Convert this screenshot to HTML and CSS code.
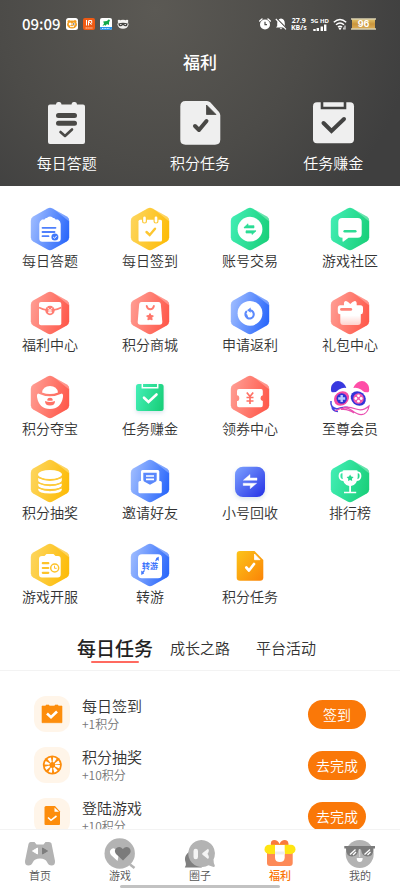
FILE: index.html
```html
<!DOCTYPE html>
<html lang="zh-CN">
<head>
<meta charset="utf-8">
<meta name="viewport" content="width=device-width, initial-scale=1">
<title>福利</title>
<link rel="stylesheet" href="styles.css">
</head>
<body>
<svg class="defs" width="0" height="0" aria-hidden="true">
  <defs>
    <linearGradient id="blue" x1="0" y1="0.3" x2="1" y2="0.6"><stop offset="0" stop-color="#9dbbff"/><stop offset="1" stop-color="#2b68fb"/></linearGradient>
    <linearGradient id="gold" x1="0" y1="0.3" x2="1" y2="0.6"><stop offset="0" stop-color="#fdd55c"/><stop offset="1" stop-color="#fdbc08"/></linearGradient>
    <linearGradient id="green" x1="0" y1="0.3" x2="1" y2="0.6"><stop offset="0" stop-color="#41edb3"/><stop offset="1" stop-color="#1ad07b"/></linearGradient>
    <linearGradient id="red" x1="0" y1="0.3" x2="1" y2="0.6"><stop offset="0" stop-color="#ff9c92"/><stop offset="1" stop-color="#ff594b"/></linearGradient>
    <linearGradient id="royal" x1="0" y1="0" x2="1" y2="1"><stop offset="0" stop-color="#7ea3ff"/><stop offset="1" stop-color="#2330e6"/></linearGradient>
    <linearGradient id="orange" x1="0" y1="0" x2="1" y2="1"><stop offset="0" stop-color="#fcc419"/><stop offset="1" stop-color="#fb8407"/></linearGradient>
    <linearGradient id="gift" x1="0" y1="0" x2="0" y2="1"><stop offset="0.6" stop-color="#fff"/><stop offset="1" stop-color="#ffd2cd"/></linearGradient>
    <linearGradient id="battery" x1="0" y1="0" x2="0" y2="1"><stop offset="0" stop-color="#e3c56c"/><stop offset="0.5" stop-color="#c9953c"/><stop offset="1" stop-color="#dcae58"/></linearGradient>
    <symbol id="hex" viewBox="0 0 44 44">
      <path d="M19.500 1.400Q22 0 24.500 1.400L38.800 9.600Q41.200 11 41.200 13.800V30.200Q41.200 33 38.800 34.400L24.500 42.600Q22 44 19.500 42.600L5.200 34.400Q2.800 33 2.800 30.200V13.800Q2.800 11 5.200 9.600Z"/>
      <path d="M26 2.300L38.800 9.600Q41.200 11 41.200 14.500Z" fill="#fff" fill-opacity=".3"/>
    </symbol>
  </defs>
</svg>

<main class="page">
  <header class="hero">
    <div class="status">
      <div class="status-left">
        <time>09:09</time>
        <svg width="12" height="12" viewBox="0 0 12 12"><rect width="12" height="12" rx="2.500" fill="#fff"/><circle cx="3" cy="3.600" r="1.500" fill="#f29c20"/><circle cx="9" cy="3.600" r="1.500" fill="#f29c20"/><ellipse cx="6" cy="6.500" rx="5" ry="4" fill="#f29c20"/><circle cx="4.200" cy="6" r="1.500" fill="#fff"/><circle cx="7.800" cy="6" r="1.500" fill="#fff"/><circle cx="7.800" cy="6" r=".7" fill="#333"/><path d="M4 8.600h4" stroke="#fff"/></svg>
        <svg width="12" height="12" viewBox="0 0 12 12"><rect width="12" height="12" rx="2" fill="#ef5a13"/><path d="M3.500 2v5.500M5.500 7.500V3l3 3.800M5.500 2.500h3.200v3" fill="none" stroke="#fff" stroke-width="1"/><path d="M2.500 10h7" stroke="#ffd0b0" stroke-width="1" stroke-dasharray="1.500 .4"/></svg>
        <svg width="12" height="12" viewBox="0 0 12 12"><rect width="12" height="12" rx="2" fill="#fff"/><path d="M2.500 8L4 5.500L3.200 3.500L7 3L8.500 1.500L10 2L9 4.500V7L7 6L5.500 7.800L4.500 7Z" fill="#11a84a"/><path d="M0 9h12v1q0 2-2 2H2Q0 12 0 10Z" fill="#2b96ee"/><path d="M2 10.500h8" stroke="#fff" stroke-width=".8" stroke-dasharray="1 .6"/></svg>
        <svg width="12" height="12" viewBox="0 0 12 12"><ellipse cx="6" cy="6.300" rx="5.500" ry="4.500" fill="#f2f2f0"/><circle cx="2" cy="3" r="1.300" fill="#f2f2f0"/><circle cx="10" cy="3" r="1.300" fill="#f2f2f0"/><path d="M1.200 5.500Q6 4 10.800 5.500Q10.500 8.500 8.500 8.300Q7 8.200 6 7Q5 8.200 3.500 8.300Q1.500 8.500 1.200 5.500Z" fill="#454542"/><path d="M3 6.500h1.500M7.500 6.500H9" stroke="#fff" stroke-width=".8"/></svg>
      </div>
      <div class="status-right">
        <svg width="12" height="12" viewBox="0 0 12 12"><circle cx="6" cy="6.500" r="5" fill="#fff"/><path d="M.7 3L3 1M11.300 3L9 1" stroke="#fff" stroke-width="1.400" stroke-linecap="round"/><path d="M6 3.800V6.700H8" fill="none" stroke="#4d4c49" stroke-width="1.200"/></svg>
        <svg width="12" height="12" viewBox="0 0 12 12"><path d="M6 .5Q9.800 1 9.800 5.500V8L11 9.500H1L2.200 8V5.500Q2.200 1 6 .5ZM4.700 10.300H7.300Q6 12 4.700 10.300Z" fill="#fff"/><path d="M1.600 .4L12 10.800" stroke="#4b4a47" stroke-width="1.300"/><path d="M.8 1L11 11.300" stroke="#fff" stroke-width="1.100"/></svg>
        <div class="speed"><span>27.9</span><span>KB/s</span></div>
        <div class="signal"><span>5G HD</span>
          <svg width="14" height="7" viewBox="0 0 14 7"><path d="M1.500 7V5M4.800 7V4M8.800 7V2.500M12.200 7V.5" stroke="#fff" stroke-width="2.400"/></svg>
        </div>
        <svg width="14" height="12" viewBox="0 0 14 12"><path d="M.8 4.300Q7-1.200 13.200 4.300M3 6.800Q7 3.300 11 6.800M5 9.100Q7 7.300 9 9.100" fill="none" stroke="#fff" stroke-width="1.500"/><circle cx="7" cy="10.600" r="1.200" fill="#fff"/><path d="M12 7.500v4M10.800 9.500v2" stroke="#fff" stroke-width="1"/></svg>
        <svg width="25" height="12" viewBox="0 0 25 12"><rect x="1" y="1" width="23" height="10" fill="url(#battery)"/><path d="M0 1h25M0 11h25" stroke="#d9cfae" stroke-width="1.400"/><text x="12.500" y="9.300" text-anchor="middle" class="battery-text">96</text></svg>
      </div>
    </div>
    <h1>福利</h1>
    <div class="hero-actions">
      <a href="#quiz"><svg width="44" height="44" viewBox="0 0 44 44"><path d="M5 3.500H11Q11 1 13 1H14.500Q16.500 1 16.500 3.500H26.500Q26.500 1 28.500 1H30Q32 1 32 3.500H38Q40 3.500 40 5.500V41Q40 43 38 43H5Q3 43 3 41V5.500Q3 3.500 5 3.500Z" fill="#efefef"/><path d="M13.500 14.500h16M13.500 22.200h16" stroke="#4a4946" stroke-width="5" stroke-linecap="round"/><path d="M15.500 31L20 35L27 28.500" fill="none" stroke="#4a4946" stroke-width="2.600" stroke-linecap="round" stroke-linejoin="round"/></svg><span>每日答题</span></a>
      <a href="#points"><svg width="44" height="44" viewBox="0 0 44 44"><path d="M7.500 0H29Q31 0 32.500 1.500L41 11Q42.300 12.500 42.300 14.500V38.500Q42.300 43.700 37 43.700H7.500Q2.300 43.700 2.300 38.500V5.500Q2.300 0 7.500 0Z" fill="#efefef"/><path d="M28.500 4V13.500H38Z" fill="#494845" stroke="#494845" stroke-width=".8" stroke-linejoin="round"/><path d="M17 25L21 29L28.500 20" fill="none" stroke="#494845" stroke-width="4" stroke-linecap="round" stroke-linejoin="round"/></svg><span>积分任务</span></a>
      <a href="#earn"><svg width="44" height="44" viewBox="0 0 44 44"><rect x="2" y="1.300" width="41" height="41" rx="4" fill="#efefef"/><path d="M11 1V7H34V1" fill="none" stroke="#434342" stroke-width="2.600"/><path d="M12.500 22L20.500 30L33 18" fill="none" stroke="#434342" stroke-width="4" stroke-linecap="round"/></svg><span>任务赚金</span></a>
    </div>
  </header>

  <section class="services" aria-label="福利功能">
    <a href="#s1"><svg class="icon" viewBox="0 0 44 44"><use href="#hex" fill="url(#blue)"/><path d="M14 12.500H16.500Q17 10.500 19 11Q19.500 9.500 22 9.500T25 11Q27 10.500 27.500 12.500H30Q32.700 14 32.700 17V31.700Q32.700 34.700 29.700 34.700H14.300Q11.300 34.700 11.300 31.700V17Q11.300 14 14 12.500Z" fill="#fff"/><path d="M14.500 20.800H27.500M14.500 25H26.500M14.500 29.200H20.500" stroke="#4f80fc" stroke-width="1.800" stroke-linecap="round"/><circle cx="26.900" cy="30" r="3.500" fill="#4077fb"/><path d="M25.200 30L26.500 31.300L28.800 28.800" stroke="#fff" fill="none"/></svg><span>每日答题</span></a>
    <a href="#s2"><svg class="icon" viewBox="0 0 44 44"><use href="#hex" fill="url(#gold)"/><rect x="10.500" y="12.800" width="23.500" height="21.700" rx="1.500" fill="#fff"/><path d="M16.500 11.500V14M28 11.500V14" stroke="#fdca38" stroke-width="5" stroke-linecap="round"/><path d="M16.500 10.800V14.200M28 10.800V14.200" stroke="#fff" stroke-width="2.600" stroke-linecap="round"/><path d="M18.500 25L21.700 28L27 21.700" fill="none" stroke="#fdc630" stroke-width="2.400" stroke-linecap="round"/></svg><span>每日签到</span></a>
    <a href="#s3"><svg class="icon" viewBox="0 0 44 44"><use href="#hex" fill="url(#green)"/><circle cx="22" cy="22.200" r="12.400" fill="#fff"/><path d="M16 20.500L20 16.800V18.700H26V20.900H16ZM28 23.900L24 27.500V26H18V23.800H28Z" fill="#2bdc95" stroke="#2bdc95" stroke-width=".7" stroke-linejoin="round"/></svg><span>账号交易</span></a>
    <a href="#s4"><svg class="icon" viewBox="0 0 44 44"><use href="#hex" fill="url(#green)"/><path d="M14.300 11H29.700Q33.700 11 33.700 15V26.700Q33.700 30.700 29.700 30.700H20.500L15.500 34.500Q14.500 35 14.500 33.800V30.700Q10.300 30.700 10.300 26.700V15Q10.300 11 14.300 11Z" fill="#fff"/><path d="M16.700 24.200H27.300" stroke="#2ddc95" stroke-width="2.600" stroke-linecap="round"/></svg><span>游戏社区</span></a>

    <a href="#s5"><svg class="icon" viewBox="0 0 44 44"><use href="#hex" fill="url(#red)"/><rect x="11" y="11" width="22.300" height="23.200" rx="2" fill="#fff"/><path d="M11 16.500Q15 18.500 18.500 19M33.300 16.500Q29.500 18.500 25.500 19" fill="none" stroke="#ff8176" stroke-width="1.600"/><circle cx="22" cy="19.500" r="4.700" fill="#ff7d72"/><path d="M19.700 16.800L22 19.400L24.300 16.800M22 19.400V22.800M20 20H24M20 21.600H24" fill="none" stroke="#fff" stroke-width=".9"/></svg><span>福利中心</span></a>
    <a href="#s6"><svg class="icon" viewBox="0 0 44 44"><use href="#hex" fill="url(#red)"/><path d="M13.500 11H30.500Q32.500 11 32.800 13L34.300 30.700Q34.500 33.700 31.500 33.700H12.500Q9.500 33.700 9.700 30.700L11.200 13Q11.500 11 13.500 11Z" fill="#fff"/><path d="M18.700 15Q19.500 18.300 22.300 18.300T25.900 15" fill="none" stroke="#ff7c70" stroke-width="1.900" stroke-linecap="round"/><path d="M22 22.500L23.100 24.500L25.400 24.900L23.800 26.600L24.100 28.900L22 28L19.900 28.900L20.200 26.600L18.600 24.900L20.900 24.500Z" fill="#ff7569" stroke="#ff7569" stroke-width="1" stroke-linejoin="round"/></svg><span>积分商城</span></a>
    <a href="#s7"><svg class="icon" viewBox="0 0 44 44"><use href="#hex" fill="url(#blue)"/><circle cx="22" cy="22.300" r="12.400" fill="#fff"/><path d="M18.300 20.700A4.200 4.200 0 1 0 22.300 19.200M18.300 24Q18.500 25 19 25.800" fill="none" stroke="#5b89fc" stroke-width="2.100" stroke-linecap="round"/><path d="M19 19.300L22.700 16.600V21.800Z" fill="#5b89fc"/></svg><span>申请返利</span></a>
    <a href="#s8"><svg class="icon" viewBox="0 0 44 44"><use href="#hex" fill="url(#red)"/><path d="M12 14.200H16Q15.500 10 18 10Q20 10.500 22.300 13Q24.500 10.500 26.800 10Q29 10 28.700 14.200H32.500Q35 14.200 35 16.700V20.800Q35 23.300 32.800 23.300V31Q32.800 34 29.800 34H15.300Q12.300 34 12.300 31V23.300Q9.800 23.300 9.800 20.800V16.700Q9.800 14.200 12 14.200Z" fill="url(#gift)"/><path d="M13.500 18.400H22.700" stroke="#ff8378" stroke-width="2.900" stroke-linecap="round"/></svg><span>礼包中心</span></a>

    <a href="#s9"><svg class="icon" viewBox="0 0 44 44"><use href="#hex" fill="url(#red)"/><path d="M14 17.500Q15 11 22 11T30 17.500Q22 20.500 14 17.500Z" fill="#fff"/><path d="M10 18.500Q22 24 34 18.500Q35.500 19 35 22Q33 34 22 34T9 22Q8.500 19 10 18.500Z" fill="#fff"/><path d="M19 25.200Q19.500 22.800 22 22.800T25 25.200Q22 26.200 19 25.200ZM17 26Q22 28 27 26Q27 30.500 22 30.500T17 26Z" fill="#ff7266"/></svg><span>积分夺宝</span></a>
    <a href="#s10"><svg class="icon" viewBox="0 0 44 44"><rect class="glow" x="8" y="9" width="27.600" height="27" rx="2.500" fill="url(#green)"/><path d="M14.300 9V12.700H29.700V9" fill="none" stroke="#fff" stroke-width="1.500"/><path d="M16 22.700L20.500 27L28.500 19.500" fill="none" stroke="#fff" stroke-width="2.600" stroke-linecap="round"/></svg><span>任务赚金</span></a>
    <a href="#s11"><svg class="icon" viewBox="0 0 44 44"><use href="#hex" fill="url(#red)"/><path d="M11 14H33Q34.800 14 34.800 16V20.200Q32.500 20.500 32.500 23.200T34.800 26V30.300Q34.800 32.300 33 32.300H11Q9 32.300 9 30.300V26Q11.300 26 11.300 23.200T9 20.200V16Q9 14 11 14Z" fill="#fff"/><path d="M18.800 17.500L22 21.500L25.200 17.500M22 21.500V29M18.500 22.500H25.500M18.500 26H25.500" fill="none" stroke="#ff7165" stroke-width="1.700"/></svg><span>领券中心</span></a>
    <a href="#s12"><svg class="icon" viewBox="0 0 44 44"><path d="M3.500 17Q1.800 12 5 8.500T12.500 6.500T18.300 13Q15 12 11 14.500Q8 18 3.500 17Z" fill="#3838df"/><path d="M40.700 17Q42.200 12 39 8.500T31.500 6.500T25.300 13Q29 12 33 14.500Q36 18 40.700 17Z" fill="#ff4da7"/><ellipse cx="13.500" cy="23.500" rx="8" ry="6.800" fill="#f34aa5" transform="rotate(-40 13.500 23.500)"/><circle cx="13.700" cy="23.500" r="5.200" fill="#3033d4"/><path d="M13.700 20V27M10.200 23.500H17.200" stroke="#b7ccff" stroke-width="2.400"/><ellipse cx="30.300" cy="23.500" rx="8" ry="6.800" fill="#3333d8" transform="rotate(40 30.300 23.500)"/><circle cx="30.500" cy="23.500" r="5.300" fill="#f258af"/><g fill="#fff"><circle cx="30.500" cy="20.800" r="1.400"/><circle cx="30.500" cy="26.200" r="1.400"/><circle cx="27.800" cy="23.500" r="1.400"/><circle cx="33.200" cy="23.500" r="1.400"/></g><path d="M3 26Q2 33 9 34Q15 31.500 20 32.500M4 31Q4 36 10 36.500" fill="none" stroke="#4145df" stroke-width="1.500"/><path d="M7 36Q17 30 24 35.500T36 39Q40 37 41 31Q35 36.500 28 34T15 32.500M13 34.500Q20 33.500 26 38" fill="none" stroke="#ea4fb1" stroke-width="1.200"/></svg><span>至尊会员</span></a>

    <a href="#s13"><svg class="icon" viewBox="0 0 44 44"><use href="#hex" fill="url(#gold)"/><g fill="#fff"><path d="M10.200 29.500Q22 34.500 33.800 29.500V30.800Q33.800 34.500 22 34.500T10.200 30.800Z"/><path d="M10.200 24.500Q22 29.500 33.800 24.500V26.300Q33.800 30 22 30T10.200 26.300Z"/><path d="M10.200 19Q22 24 33.800 19V21.500Q33.800 25.200 22 25.200T10.200 21.500Z"/><ellipse cx="22" cy="15.500" rx="11.900" ry="4.500"/></g><path d="M10 18.200Q22 24.500 34 18.200M10 23.500Q22 29.500 34 23.500M10 28.500Q22 34.500 34 28.500" fill="none" stroke="#fdcb3d" stroke-width="1.300"/></svg><span>积分抽奖</span></a>
    <a href="#s14"><svg class="icon" viewBox="0 0 44 44"><use href="#hex" fill="url(#blue)"/><path d="M13 22V12.500Q13 11 14.500 11H29.800Q31.300 11 31.300 12.500V22H32.200Q33.800 22 33.800 23.500V32.800Q33.800 34.300 32.300 34.300H12Q10.400 34.300 10.400 32.800V23.500Q10.400 22 12 22Z" fill="#fff"/><path d="M15.300 13.800H28.700V20.500Q28.700 22.500 27 23L22 25.800L17 23Q15.300 22.500 15.300 20.500Z" fill="#5a88fc"/><path d="M18 17H26M18 20.300H26" stroke="#fff" stroke-width="1.700"/></svg><span>邀请好友</span></a>
    <a href="#s15"><svg class="icon" viewBox="0 0 44 44"><rect class="glow" x="7" y="7.700" width="30" height="30.300" rx="8" fill="url(#royal)"/><path d="M15.500 21L22 15.500V18.900H29V21.300H15.500ZM28.700 24.200L22.200 29.700V26.500H15.200V24.200Z" fill="#fff" stroke="#fff" stroke-width=".4" stroke-linejoin="round"/></svg><span>小号回收</span></a>
    <a href="#s16"><svg class="icon" viewBox="0 0 44 44"><use href="#hex" fill="url(#green)"/><path d="M15.500 13.500Q11.500 12.500 11.500 17T16.500 21M28.500 13.500Q32.500 12.500 32.500 17T27.500 21" fill="none" stroke="#fff" stroke-width="1.800"/><path d="M16 11.300H28.500Q29.700 11.300 29.700 12.500V18Q29.500 25.800 23 27V32.700H28.200V34.300H16V32.700H21.200V27Q14.700 25.800 14.500 18V12.500Q14.500 11.300 16 11.300Z" fill="#fff"/><path d="M22.100 15.500L23.200 17.600L25.600 18L23.900 19.700L24.200 22L22.100 21L20 22L20.300 19.700L18.600 18L21 17.600Z" fill="#24d88e"/></svg><span>排行榜</span></a>

    <a href="#s17"><svg class="icon" viewBox="0 0 44 44"><use href="#hex" fill="url(#gold)"/><path d="M14 13H16.500L18.500 11H25.500L27.500 13H30Q32.700 13 32.700 16V31.500Q32.700 34.500 29.700 34.500H14Q11 34.500 11 31.500V16Q11 13 14 13Z" fill="#fff"/><path d="M14.800 20.200H20.300M14.800 25H20.300M14.800 29.800H20.300" stroke="#fdc32a" stroke-width="2.200" stroke-linecap="round"/><circle cx="26.700" cy="25" r="4" fill="#fff" stroke="#fdc32a" stroke-width="1.500"/><path d="M26.500 22.700V25.300H28.700" fill="none" stroke="#fdc32a"/></svg><span>游戏开服</span></a>
    <a href="#s18"><svg class="icon" viewBox="0 0 44 44"><use href="#hex" fill="url(#blue)"/><rect x="10" y="11.200" width="24" height="24" rx="4" fill="#fff"/><text x="22" y="25.500" text-anchor="middle" class="mini-text">转游</text><path d="M27.500 17.800L29.500 15.800M14.500 29.500L16.500 27.500" stroke="#3c74fc" stroke-width="1.300"/><path d="M28 15.500L30.500 14V17.500ZM16 30.200L13.500 31.500V28Z" fill="#3c74fc" stroke="#3c74fc" stroke-width=".5"/></svg><span>转游</span></a>
    <a href="#s19"><svg class="icon" viewBox="0 0 44 44"><path d="M12 8H26.500L35.300 17V34.500Q35.300 37.700 32 37.700H12Q8.700 37.700 8.700 34.500V11Q8.700 8 12 8Z" fill="url(#orange)"/><path d="M26.500 11V16.700H32Z" fill="#fff" stroke="#fff" stroke-width=".8" stroke-linejoin="round"/><path d="M18.300 24.500L21 27.500L26 21" fill="none" stroke="#fff" stroke-width="2.700" stroke-linecap="round" stroke-linejoin="round"/></svg><span>积分任务</span></a>
  </section>

  <div class="tabs" role="tablist">
    <button type="button" role="tab" aria-selected="true" class="tab active">每日任务</button>
    <button type="button" role="tab" aria-selected="false" class="tab">成长之路</button>
    <button type="button" role="tab" aria-selected="false" class="tab">平台活动</button>
  </div>

  <ul class="tasks">
    <li>
      <svg class="task-icon" viewBox="0 0 36 36"><path d="M8 10H12V9H15V10H21V9H24V10H28V26.700H8Z" fill="#fd8d0c" stroke="#fd8d0c" stroke-width=".6" stroke-linejoin="round"/><path d="M13 17.500L17 21.300L23 15.500" fill="none" stroke="#fff" stroke-width="2.600"/></svg>
      <div class="task-text"><h2>每日签到</h2><p>+1积分</p></div>
      <button type="button" class="go">签到</button>
    </li>
    <li>
      <svg class="task-icon" viewBox="0 0 36 36"><circle cx="18.300" cy="18" r="9.500" fill="#fd8d0c"/><circle cx="18.300" cy="18" r="5.200" fill="none" stroke="#fff" stroke-width="5" stroke-dasharray="2.480 1.604"/><circle cx="18.300" cy="18" r="2.800" fill="#fd8d0c"/></svg>
      <div class="task-text"><h2>积分抽奖</h2><p>+10积分</p></div>
      <button type="button" class="go">去完成</button>
    </li>
    <li>
      <svg class="task-icon" viewBox="0 0 36 36"><path d="M12 8H21L26 13.500V26Q26 27 25 27H11.500Q10.500 27 10.500 26V9.500Q10.500 8 12 8Z" fill="#fd8d0c"/><path d="M20.500 9.500V13.700H25Z" fill="#fff"/><path d="M14 19.500L17 22.300L22.500 18" fill="none" stroke="#fff" stroke-width="1.600"/></svg>
      <div class="task-text"><h2>登陆游戏</h2><p>+10积分</p></div>
      <button type="button" class="go">去完成</button>
    </li>
  </ul>
</main>

<nav class="bottom" aria-label="主导航">
  <div class="bottom-items">
    <a href="#home"><svg viewBox="0 0 32 32"><path d="M5 6Q5.500 5 7 5H10.500L12.500 7.500H19.500L21.500 5H25Q27 5 27.500 6.500L31 24Q31.300 28.500 27.500 28.500Q24.500 28.500 23 25Q21.500 21.500 16 21.500T9 25Q7.500 28.500 4.500 28.500Q.7 28.500 1 24L4.500 7Z" fill="#b3b3b3"/><path d="M13.500 11V17L8.500 14Z" fill="#fff" stroke="#fff" stroke-linejoin="round"/><path d="M18.500 11V17L23.500 14Z" fill="#7d7d7d" stroke="#7d7d7d" stroke-linejoin="round"/></svg><span>首页</span></a>
    <a href="#games"><svg viewBox="0 0 32 32"><circle cx="15.700" cy="16.500" r="15.200" fill="#b3b3b3"/><path d="M26 27.500L30.500 31" stroke="#b3b3b3" stroke-width="2.500"/><path d="M13.500 24L7 18Q4.500 14 7.500 12T13 14L16 12Z" fill="#fff"/><path d="M19 23.500L12 17Q9.500 13.500 12.500 11Q16 8.500 18.800 12Q22 8.500 25.300 11Q28 14 25.500 17Z" fill="#7b7b7b"/></svg><span>游戏</span></a>
    <a href="#circle"><svg viewBox="0 0 32 32"><path d="M1 30Q2.500 28 1.500 25Q-.5 19 5 15L18 30.500H1.500Q.5 30.500 1 30Z" fill="#7f7f7f"/><path d="M17.300 3A13.500 13.500 0 0 1 29.500 22.500Q29.500 26 30.800 28.500Q31 30 29.500 30L24.500 28.200A13.500 13.500 0 1 1 17.300 3Z" fill="#b3b3b3"/><rect x="9.500" y="11.800" width="4.500" height="10.500" rx="2.200" fill="#f4f4f4"/><path d="M24 11.800Q26 13.500 23.500 16.800Q26 20.500 24 22L18.500 17.800Q17.800 16.800 18.500 16Z" fill="#f4f4f4"/></svg><span>圈子</span></a>
    <a href="#welfare" class="current" aria-current="page"><svg viewBox="0 0 32 32"><path d="M7 9Q6 3 10 3T15.500 7Q17 3 21 3T24.500 9Z" fill="#f9793f"/><path d="M3 14H28.700V26Q28.700 29 25.700 29H6Q3 29 3 26Z" fill="#fd8a57"/><rect x=".5" y="7.700" width="31" height="9.200" rx="4.500" fill="#ffe512"/><path d="M11 8H20.700V20.500Q20.500 25 15.800 25T11 20.500Z" fill="#fff"/><path d="M11 14.500H20.700V17.500H11Z" fill="#eee"/></svg><span>福利</span></a>
    <a href="#me"><svg viewBox="0 0 32 32"><circle cx="15.700" cy="17" r="14" fill="#b3b3b3"/><path d="M.3 9H31V11.500H29.500Q29.500 19.500 23.500 19.500Q18 19.500 17 12.500H14.500Q13.500 19.500 8 19.500Q2 19.500 2 11.500H.3Z" fill="#7b7b7b"/><path d="M6 17.500L11.500 12.500M9 18L12 15M20.500 17.500L26 12.500M23.500 18L26.500 15" stroke="#fff" stroke-width="1.300"/><path d="M15.700 12V20" stroke="#ddd"/><path d="M12.700 21H18.700Q18.700 25 15.700 25T12.700 21Z" fill="#fff"/></svg><span>我的</span></a>
  </div>
  <div class="home-bar"></div>
</nav>
</body>
</html>
```
FILE: styles.css
```css
* {
  box-sizing: border-box;
  margin: 0;
  padding: 0;
}

body {
  display: flex;
  flex-direction: column;
  height: 100vh;
  background: #fff;
  color: #333;
  font-family: "Noto Sans CJK SC", "Noto Sans", sans-serif;
  font-size: 14px;
  font-weight: 350;
}

a {
  color: inherit;
  text-decoration: none;
}

button {
  border: 0;
  background: none;
  color: inherit;
  font-family: inherit;
  font-weight: inherit;
  cursor: pointer;
}

svg {
  display: block;
  flex: none;
}

.defs {
  position: absolute;
}

.page {
  flex: 1;
  min-height: 0;
  overflow-y: auto;
  scrollbar-width: none;
}

/* Header */
.hero {
  padding: 14px 0 12px;
  background: radial-gradient(ellipse 260px 260px at 155px 10px, #5b5954 0%, #4c4b48 60%, #3f3f3f 100%);
  color: #fff;
}

.status {
  display: flex;
  align-items: center;
  justify-content: space-between;
  height: 20px;
  padding: 0 24px 0 22px;
}

.status-left {
  display: flex;
  align-items: center;
  gap: 5px;
}

.status-left time {
  font-size: 15px;
  font-weight: 500;
  line-height: 20px;
}

.status-right {
  display: flex;
  align-items: center;
  gap: 4px;
}

.speed,
.signal {
  display: flex;
  flex-direction: column;
  align-items: center;
  font-family: "Open Sans", "Noto Sans", sans-serif;
  font-weight: 700;
}

.speed {
  font-size: 7px;
  line-height: 7px;
}

.signal {
  font-size: 6px;
  line-height: 6px;
}

.battery-text {
  fill: #fff;
  font-family: Inter, sans-serif;
  font-size: 9px;
  font-weight: 700;
}

.hero h1 {
  margin-top: 16px;
  font-size: 17px;
  font-weight: 500;
  line-height: 24px;
  text-align: center;
}

.hero-actions {
  display: grid;
  grid-template-columns: repeat(3, 1fr);
  margin-top: 27px;
}

.hero-actions a {
  display: flex;
  flex-direction: column;
  align-items: center;
  gap: 7px;
  font-size: 15px;
  line-height: 22px;
}

/* Service grid */
.services {
  display: grid;
  grid-template-columns: repeat(4, 1fr);
  row-gap: 22px;
  padding-top: 21px;
}

.services a {
  display: flex;
  flex-direction: column;
  align-items: center;
  line-height: 18px;
}

.icon {
  width: 44px;
  height: 44px;
}

.glow {
  filter: drop-shadow(0 2px 2px rgba(60, 120, 160, 0.2));
}

.mini-text {
  fill: #3c74fc;
  font-size: 8px;
  font-weight: 700;
}

/* Tabs */
.tabs {
  display: flex;
  align-items: center;
  justify-content: center;
  gap: 8px;
  padding: 29px 0 8px 2px;
  border-bottom: 1px solid #f3f3f3;
}

.tab {
  padding: 0 9px;
  font-size: 15px;
  line-height: 28px;
}

.tab.active {
  position: relative;
  padding: 0;
  color: #222;
  font-size: 19px;
  font-weight: 500;
}

.tab.active::after {
  content: "";
  position: absolute;
  bottom: -1px;
  left: 14px;
  right: 14px;
  height: 2px;
  border-radius: 1px;
  background: #ff6a60;
}

/* Task list */
.tasks {
  display: flex;
  flex-direction: column;
  gap: 15px;
  padding: 25px 34px;
  list-style: none;
}

.tasks li {
  display: flex;
  align-items: center;
  gap: 12px;
}

.task-icon {
  width: 36px;
  height: 36px;
  border-radius: 12px;
  background: #fff5e9;
}

.task-text {
  flex: 1;
}

.task-text h2 {
  font-size: 15px;
  font-weight: inherit;
  line-height: 20px;
}

.task-text p {
  color: #777;
  font-size: 12px;
  line-height: 16px;
}

.go {
  width: 58px;
  height: 29px;
  border-radius: 15px;
  background: #fa7808;
  color: #fff;
  font-size: 14px;
  line-height: 29px;
}

/* Bottom navigation */
.bottom {
  padding: 7px 0 1px;
  border-top: 1px solid #f3f3f3;
  background: #fff;
}

.bottom-items {
  display: grid;
  grid-template-columns: repeat(5, 1fr);
}

.bottom-items a {
  display: flex;
  flex-direction: column;
  align-items: center;
  color: #555;
  font-size: 11px;
  line-height: 13px;
}

.bottom-items svg {
  width: 32px;
  height: 32px;
}

.bottom-items .current {
  color: #fa7303;
  font-weight: 500;
}

.home-bar {
  width: 40%;
  height: 3px;
  margin: 3px auto 0;
  border-radius: 2px;
  background: #c2c2c2;
}
```
